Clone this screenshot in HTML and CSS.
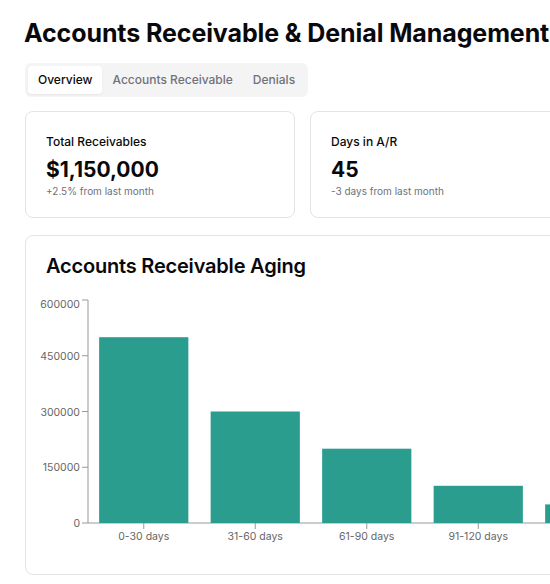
FILE: index.html
```html
<!DOCTYPE html>
<html>
<head>
  <title>Accounts Receivable &amp; Denial Management</title>

  <link rel="stylesheet" href="styles.css">
</head>
<body>
  <div class="page">
    <h1 class="page-title">Accounts Receivable &amp; Denial Management</h1>

    <!-- Tabs -->
    <div class="tabs">
      <div class="tab active">Overview</div>
      <div class="tab">Accounts Receivable</div>
      <div class="tab">Denials</div>
    </div>

    <!-- Summary cards -->
    <div class="stat-grid">
      <div class="card stat-card">
        <div class="stat-label">Total Receivables</div>
        <div class="stat-value">$1,150,000</div>
        <div class="stat-note">+2.5% from last month</div>
      </div>
      <div class="card stat-card">
        <div class="stat-label">Days in A/R</div>
        <div class="stat-value">45</div>
        <div class="stat-note">-3 days from last month</div>
      </div>
    </div>

    <!-- Aging chart -->
    <div class="card chart-card">
      <h2 class="chart-title">Accounts Receivable Aging</h2>
      <svg class="chart" width="780" height="270" viewBox="0 0 780 270">
        <g class="grid-axis">
          <!-- y axis -->
          <line x1="62" y1="10" x2="62" y2="233"></line>
          <line x1="56" y1="10" x2="62" y2="10"></line>
          <line x1="56" y1="65.75" x2="62" y2="65.75"></line>
          <line x1="56" y1="121.5" x2="62" y2="121.5"></line>
          <line x1="56" y1="177.25" x2="62" y2="177.25"></line>
          <line x1="56" y1="233" x2="62" y2="233"></line>
          <!-- x axis -->
          <line x1="62" y1="233" x2="780" y2="233"></line>
          <line x1="117.75" y1="233" x2="117.75" y2="239"></line>
          <line x1="229.25" y1="233" x2="229.25" y2="239"></line>
          <line x1="340.75" y1="233" x2="340.75" y2="239"></line>
          <line x1="452.25" y1="233" x2="452.25" y2="239"></line>
          <line x1="563.75" y1="233" x2="563.75" y2="239"></line>
        </g>
        <g class="y-labels">
          <text x="54" y="18">600000</text>
          <text x="54" y="69.75">450000</text>
          <text x="54" y="125.5">300000</text>
          <text x="54" y="181.25">150000</text>
          <text x="54" y="237">0</text>
        </g>
        <g class="bars">
          <rect x="73.15" y="47.2" width="89.2" height="185.8"></rect>
          <rect x="184.65" y="121.5" width="89.2" height="111.5"></rect>
          <rect x="296.15" y="158.7" width="89.2" height="74.3"></rect>
          <rect x="407.65" y="195.8" width="89.2" height="37.2"></rect>
          <rect x="519.15" y="214.4" width="89.2" height="18.6"></rect>
        </g>
        <g class="x-labels">
          <text x="117.75" y="249.5">0-30 days</text>
          <text x="229.25" y="249.5">31-60 days</text>
          <text x="340.75" y="249.5">61-90 days</text>
          <text x="452.25" y="249.5">91-120 days</text>
        </g>
      </svg>
    </div>
  </div>
</body>
</html>
```

FILE: styles.css
```css
html,
body {
  overflow: hidden;
}

body {
  margin: 0;
  background-color: #fff;
  color: #09090b;
  font-family: "Inter", "Liberation Sans", sans-serif;
}

.page {
  padding: 17px 24px 0 25px;
  width: 860px;
}

.page-title {
  margin: 0 0 0 -1px;
  font-size: 25px;
  line-height: 32px;
  font-weight: 700;
  letter-spacing: -0.1px;
  white-space: nowrap;
}

/* Tabs */
.tabs {
  display: inline-flex;
  align-items: center;
  margin-top: 14px;
  padding: 3px;
  background-color: #f4f4f5;
  border-radius: 6px;
}

.tab {
  padding: 0 10px;
  height: 28px;
  line-height: 28px;
  font-size: 12px;
  font-weight: 500;
  color: #71717a;
  border-radius: 4px;
}

.tab.active {
  background-color: #fff;
  color: #09090b;
  box-shadow: 0 1px 2px rgba(0, 0, 0, 0.06);
}

/* Cards */
.card {
  background-color: #fff;
  border: 1px solid #e4e4e7;
  border-radius: 8px;
  box-sizing: border-box;
}

.stat-grid {
  display: grid;
  grid-template-columns: 270px 270px;
  gap: 15px;
  margin-top: 14px;
}

.stat-card {
  padding: 22px 20px 19px;
}

.stat-label {
  font-size: 12px;
  line-height: 16px;
  font-weight: 500;
}

.stat-value {
  margin-top: 6px;
  font-size: 21px;
  line-height: 28px;
  font-weight: 700;
}

.stat-note {
  font-size: 10px;
  line-height: 14px;
  color: #71717a;
}

.chart-card {
  margin-top: 17px;
  padding: 16px 0 14px;
  width: 820px;
}

.chart-title {
  margin: 0;
  padding: 0 20px;
  font-size: 20px;
  line-height: 28px;
  font-weight: 600;
  letter-spacing: -0.2px;
}

.chart {
  display: block;
  margin-top: 10px;
  font-family: "Inter", "Liberation Sans", sans-serif;
}

.grid-axis line {
  stroke: #999;
  stroke-width: 1;
}

.bars rect {
  fill: #2a9d8f;
}

.y-labels text {
  font-size: 10.5px;
  fill: #666;
  text-anchor: end;
}

.x-labels text {
  font-size: 10.5px;
  fill: #666;
  text-anchor: middle;
}
```
